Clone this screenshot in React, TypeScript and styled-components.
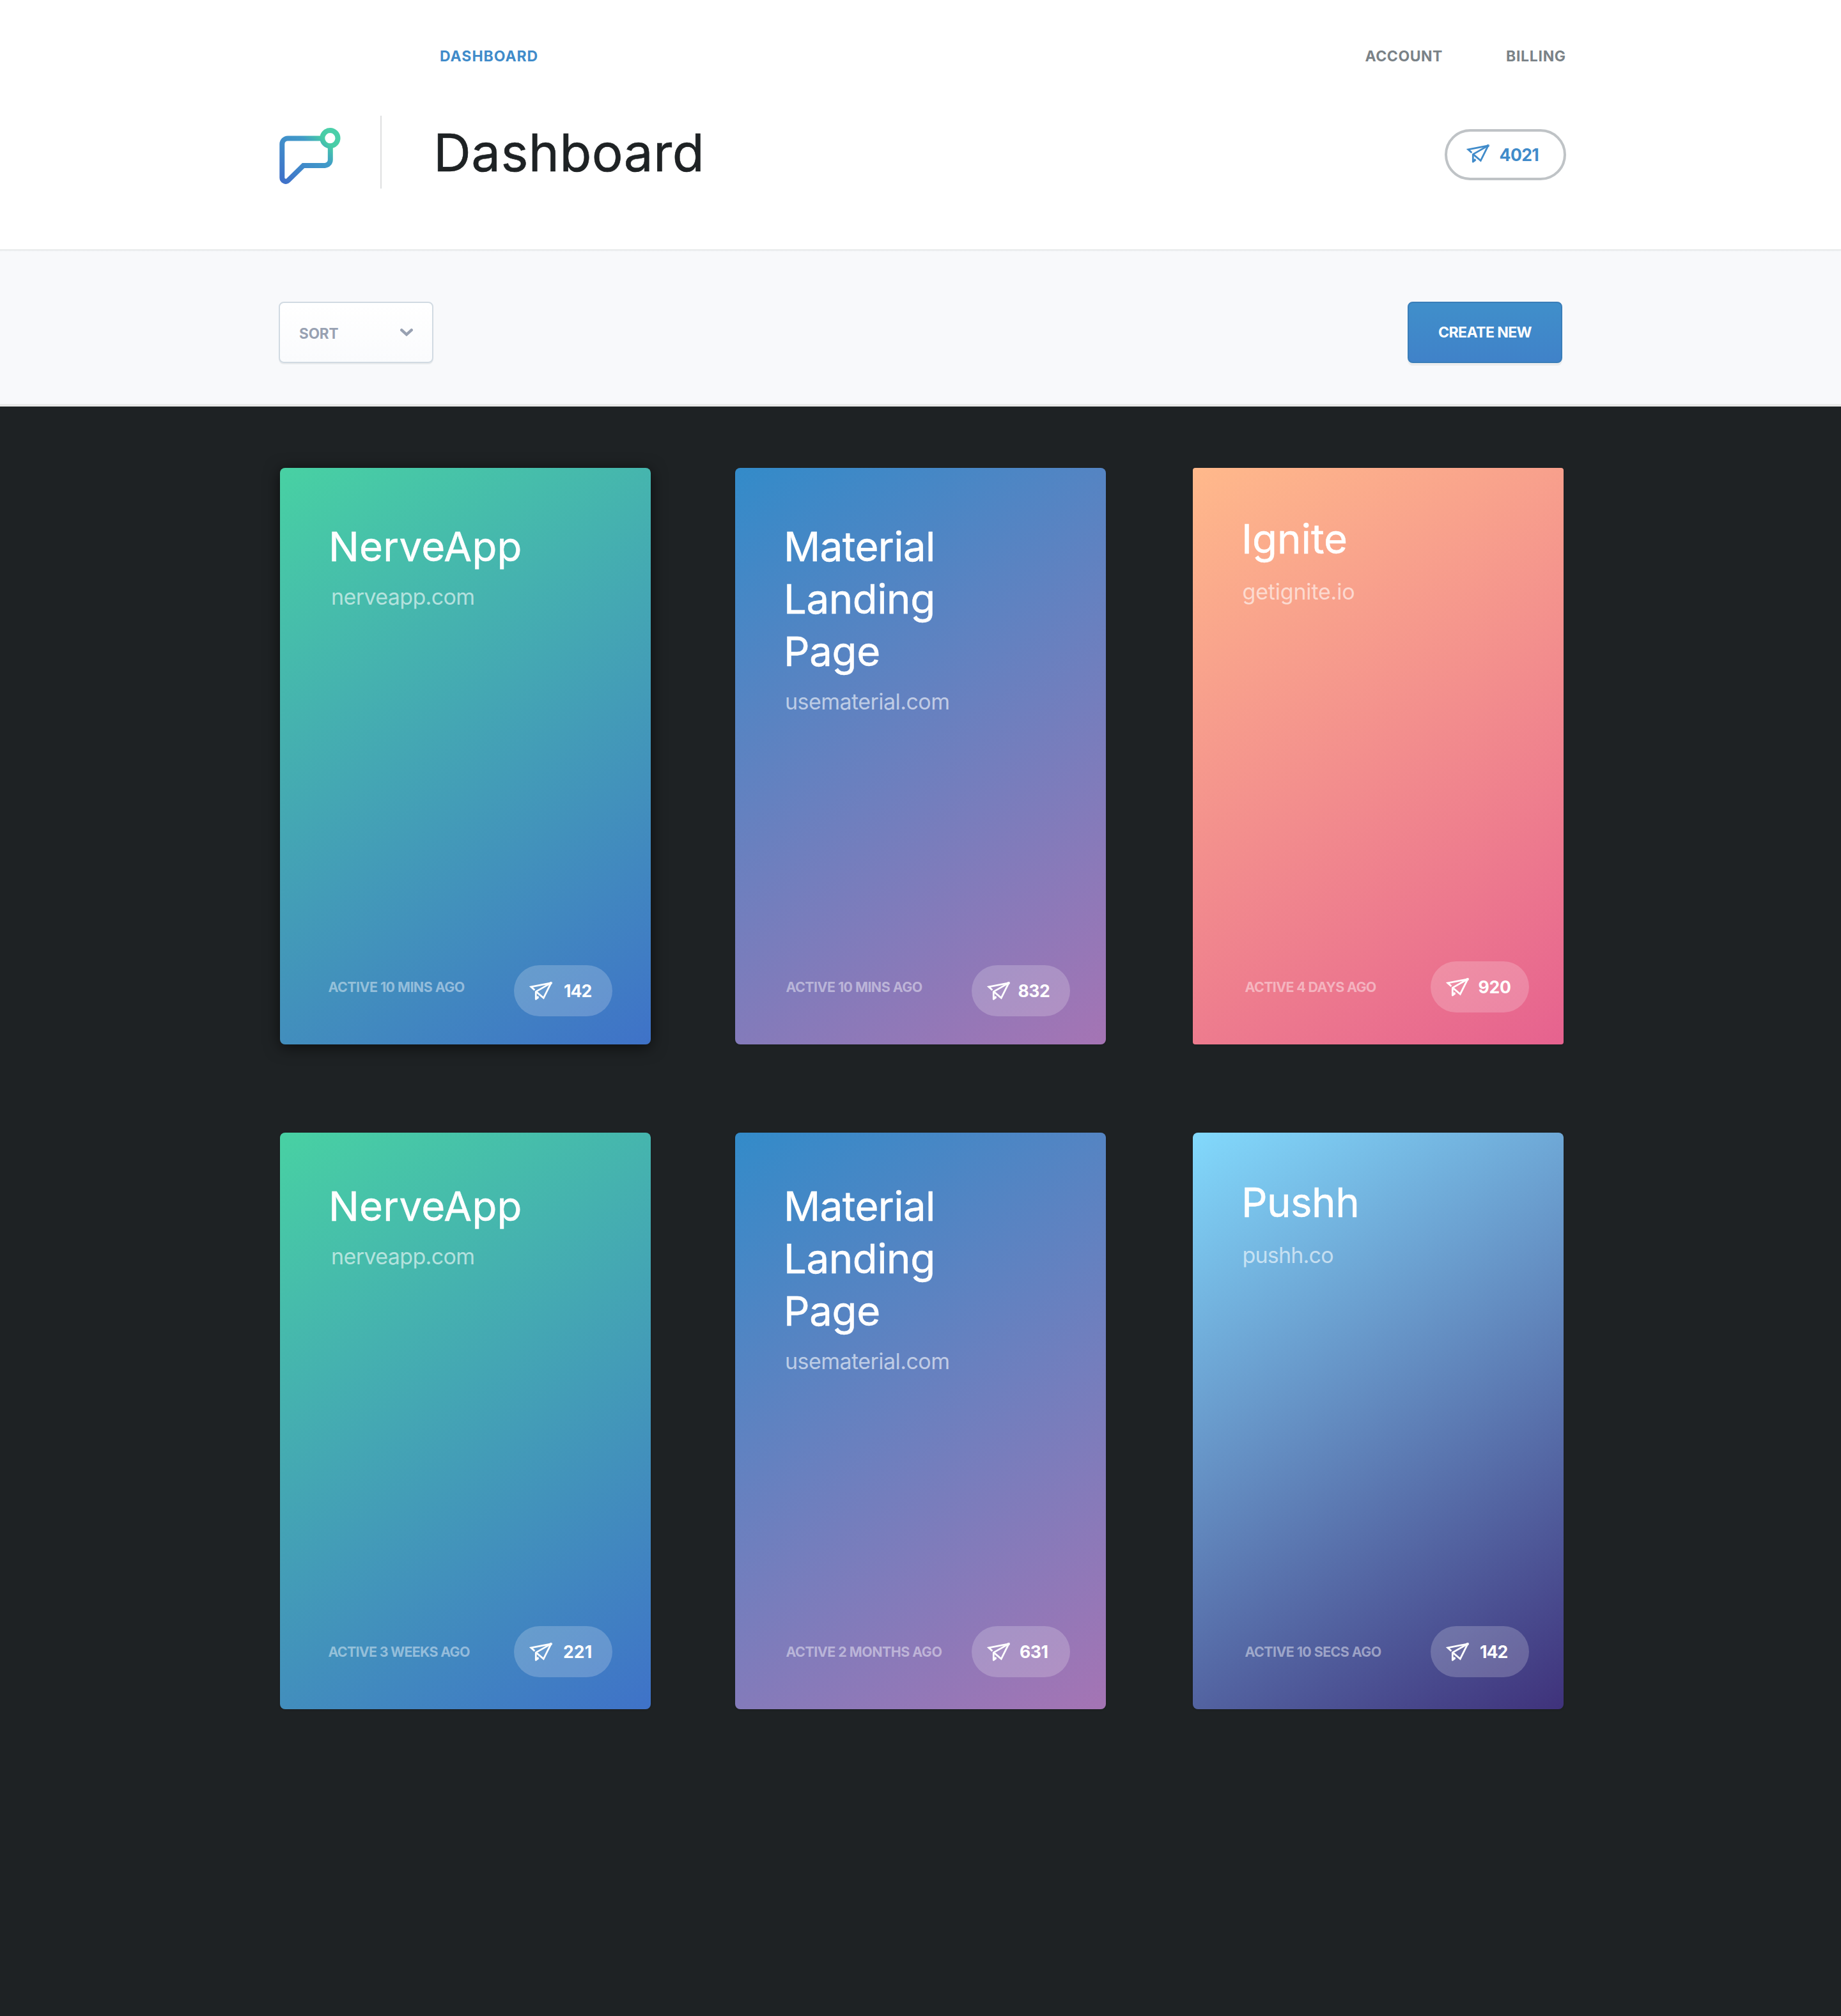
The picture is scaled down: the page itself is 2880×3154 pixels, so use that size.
import React from "react";
import styled, { createGlobalStyle } from "styled-components";

const GlobalStyle = createGlobalStyle`
  *, *::before, *::after { box-sizing: border-box; }
  body {
    margin: 0;
    background: #1e2224;
    font-family: Inter, "Liberation Sans", sans-serif;
  }
  h1, h2, p { margin: 0; font-weight: 400; }
  button { font-family: inherit; cursor: pointer; }
  svg { display: block; flex: none; }
`;

const Page = styled.div`
  width: 2880px;
  min-height: 3154px;
  background: #1e2224;
`;

/* ---------- header ---------- */

const Header = styled.header`
  height: 392px;
  padding: 74px 430px 0 436px;
  background: #fff;
  border-bottom: 2px solid #e7e9ea;
`;

const Nav = styled.nav`
  display: flex;
  justify-content: space-between;
  height: 28px;
  padding-left: 252px;
`;

const NavGroup = styled.div`
  display: grid;
  grid-template-columns: 220.5px 94px;
`;

const NavLink = styled.a<{ $active?: boolean; $tracking: number }>`
  color: ${(p) => (p.$active ? "#408bca" : "#7a8287")};
  font-size: 23px;
  font-weight: 700;
  line-height: 28px;
  letter-spacing: ${(p) => p.$tracking}px;
  white-space: nowrap;
`;

const Masthead = styled.div`
  display: flex;
  align-items: flex-start;
  margin-top: 79px;
`;

const LogoMark = styled.svg`
  width: 100px;
  height: 90px;
  margin-top: 19px;
`;

const Divider = styled.div`
  width: 2px;
  height: 114px;
  margin-left: 59px;
  background: #dedfe0;
`;

const Heading = styled.h1`
  flex: 1;
  margin: 10px 0 0 81px;
  color: #1e2224;
  font-size: 81.5px;
  line-height: 96px;
  letter-spacing: 0.4px;
  -webkit-text-stroke: 0.6px currentColor;
`;

const CreditPill = styled.div`
  display: flex;
  align-items: center;
  width: 190px;
  height: 80px;
  margin-top: 21px;
  padding-left: 30px;
  border: 4px solid #bfc3c6;
  border-radius: 40px;
  color: #408bca;

  svg { margin-top: -2px; }
`;

const Count = styled.span<{ $gap: number; $tracking: number }>`
  margin-left: ${(p) => p.$gap}px;
  font-size: 26.6px;
  font-weight: 700;
  line-height: 32px;
  letter-spacing: ${(p) => p.$tracking}px;
`;

/* ---------- toolbar ---------- */

const Toolbar = styled.section`
  display: flex;
  justify-content: space-between;
  align-items: flex-start;
  height: 244px;
  padding: 80px 436px 0;
  background: linear-gradient(#f3f5f7, #f8f9fb 3px);
  border-bottom: 4px solid #e9e9e8;
`;

const SortButton = styled.button`
  display: flex;
  justify-content: space-between;
  align-items: center;
  width: 242px;
  height: 96px;
  padding: 0 30px;
  border: 2px solid #d1dae2;
  border-radius: 8px;
  background: linear-gradient(#fff, #fafbfd);
  box-shadow: 0 2px 0 #e9ebed;
  color: #98a1b2;
  font-size: 22.5px;
  font-weight: 700;
  letter-spacing: -0.1px;

  span { padding-top: 3px; }
`;

const CreateButton = styled.button`
  width: 242px;
  height: 96px;
  padding: 0;
  border: 2px solid #3a7eb9;
  border-radius: 8px;
  background: linear-gradient(#408fca, #4082c9);
  box-shadow: 0 4px 0 #ecedee;
  color: #fff;
  font-size: 23.1px;
  font-weight: 700;
  letter-spacing: -0.62px;
`;

/* ---------- cards ---------- */

const Board = styled.main`
  display: grid;
  grid-template-columns: 712px 716px 580px;
  row-gap: 138px;
  padding: 96px 0 0 438px;
`;

const Card = styled.article<{ $fill: string; $top: number; $radius: number; $raised?: boolean }>`
  display: flex;
  flex-direction: column;
  width: 580px;
  height: 902px;
  padding-top: ${(p) => p.$top}px;
  border-radius: ${(p) => p.$radius}px;
  background: linear-gradient(147.26deg, ${(p) => p.$fill});
  box-shadow: ${(p) => (p.$raised ? "0 4px 24px rgba(0, 0, 0, 0.6)" : "0 1px 3px rgba(0, 0, 0, 0.15)")};
  color: #fff;
`;

const Name = styled.h2`
  padding-left: 76px;
  font-size: 63.5px;
  line-height: 82px;
  -webkit-text-stroke: 0.5px currentColor;
`;

const NameLine = styled.span<{ $tracking: number }>`
  display: block;
  letter-spacing: ${(p) => p.$tracking}px;
`;

const Domain = styled.p<{ $gap: number; $indent: number; $tracking: number }>`
  margin-top: ${(p) => p.$gap}px;
  padding-left: ${(p) => p.$indent}px;
  color: rgba(255, 255, 255, 0.6);
  font-size: 34px;
  line-height: 42px;
  letter-spacing: ${(p) => p.$tracking}px;
`;

const Footer = styled.footer<{ $left: number; $right: number; $bottom: number }>`
  display: flex;
  justify-content: space-between;
  align-items: flex-start;
  margin-top: auto;
  padding: 0 ${(p) => p.$right}px ${(p) => p.$bottom}px ${(p) => p.$left}px;
`;

const Activity = styled.span<{ $drop: number; $tracking: number }>`
  margin-top: ${(p) => p.$drop}px;
  color: rgba(255, 255, 255, 0.45);
  font-size: 21.4px;
  font-weight: 700;
  line-height: 26px;
  letter-spacing: ${(p) => p.$tracking}px;
  white-space: nowrap;
`;

const SentPill = styled.div`
  display: flex;
  align-items: center;
  width: 154px;
  height: 80px;
  padding-left: 24px;
  border-radius: 40px;
  background: rgba(255, 255, 255, 0.2);

  svg { margin-top: 2px; }
`;

/* ---------- drawings ---------- */

const Logo = () => (
  <LogoMark viewBox="0 0 100 90" fill="none">
    <defs>
      <linearGradient id="logo" gradientUnits="userSpaceOnUse" x1="8" y1="88" x2="85" y2="10">
        <stop offset="0" stopColor="#3f70c9" />
        <stop offset="0.45" stopColor="#408fca" />
        <stop offset="0.66" stopColor="#419bc8" />
        <stop offset="0.86" stopColor="#46cca5" />
        <stop offset="1" stopColor="#4bcfa9" />
      </linearGradient>
    </defs>
    <g stroke="url(#logo)" strokeWidth="8">
      <path d="M68.5 16.4H14.3a9 9 0 0 0-9 9V78a5.7 5.7 0 0 0 9.8 4L38.6 58.9H71.8a9 9 0 0 0 9-9V27.5" />
      <circle cx="80.4" cy="16.2" r="12.1" />
    </g>
  </LogoMark>
);

const PlaneIcon = () => (
  <svg width="36" height="30" viewBox="0 0 36 30" fill="none" stroke="currentColor" strokeWidth="2.8">
    <path strokeLinejoin="miter" d="M8.4 13 2.8 7.9 34 1.9" />
    <path strokeLinejoin="round" d="M34 1.9 10.3 15.4V27.2L14.6 24M13.2 22.6V25.4" />
    <path strokeLinejoin="miter" d="M11.2 15.9 22.3 25.3 34 1.9" />
    <circle cx="33.9" cy="1.9" r="0.7" />
  </svg>
);

const Chevron = () => (
  <svg width="20" height="12" viewBox="0 0 20 12" fill="none" stroke="currentColor" strokeWidth="4.4" strokeLinecap="round">
    <path d="M2.3 2.3 10 9.3 17.7 2.3" />
  </svg>
);

/* ---------- data ---------- */

interface Column {
  fill: string;
  urlGap: number;
  urlIndent: number;
  left: number;
  right: number;
}

interface Site {
  column: Column;
  fill?: string;
  name: [string, number][];
  top: number;
  radius: number;
  raised?: boolean;
  domain: [string, number];
  activity: [string, number];
  sent: [string, number, number];
  bottom: number;
}

const nerve: Column = { fill: "#48d1a3, #3f72c8", urlGap: 17, urlIndent: 80, left: 75.5, right: 60 };
const material: Column = { fill: "#338bc9, #a574b4", urlGap: 17, urlIndent: 78, left: 79.5, right: 56 };
const side: Column = { fill: "#ffb98b, #e6628f", urlGap: 21, urlIndent: 77.5, left: 81.5, right: 54 };

const nerveName: Site["name"] = [["NerveApp", 0.25]];
const materialName: Site["name"] = [["Material", -0.58], ["Landing", -0.45], ["Page", -0.3]];

const sites: Site[] = [
  { column: nerve, name: nerveName, top: 82, radius: 8, raised: true, domain: ["nerveapp.com", -0.62], activity: ["ACTIVE 10 MINS AGO", -0.54], sent: ["142", 18, -0.96], bottom: 44 },
  { column: material, name: materialName, top: 82, radius: 8, domain: ["usematerial.com", -0.55], activity: ["ACTIVE 10 MINS AGO", -0.54], sent: ["832", 12.5, -0.47], bottom: 44 },
  { column: side, name: [["Ignite", 0]], top: 70, radius: 4, domain: ["getignite.io", -0.19], activity: ["ACTIVE 4 DAYS AGO", -0.63], sent: ["920", 14.5, -0.2], bottom: 50 },
  { column: nerve, name: nerveName, top: 74, radius: 8, domain: ["nerveapp.com", -0.62], activity: ["ACTIVE 3 WEEKS AGO", -0.72], sent: ["221", 17, 0.1], bottom: 50 },
  { column: material, name: materialName, top: 74, radius: 8, domain: ["usematerial.com", -0.55], activity: ["ACTIVE 2 MONTHS AGO", -0.5], sent: ["631", 15, -0.5], bottom: 50 },
  { column: side, fill: "#82d9fc, #3f327b", name: [["Pushh", -0.5]], top: 68, radius: 8, domain: ["pushh.co", -0.8], activity: ["ACTIVE 10 SECS AGO", -0.57], sent: ["142", 17, -0.96], bottom: 50 },
];

const SiteCard = ({ site }: { site: Site }) => {
  const { column } = site;
  return (
    <Card $fill={site.fill ?? column.fill} $top={site.top} $radius={site.radius} $raised={site.raised}>
      <Name>
        {site.name.map(([line, tracking]) => (
          <NameLine key={line} $tracking={tracking}>{line}</NameLine>
        ))}
      </Name>
      <Domain $gap={column.urlGap} $indent={column.urlIndent} $tracking={site.domain[1]}>{site.domain[0]}</Domain>
      <Footer $left={column.left} $right={column.right} $bottom={site.bottom}>
        <Activity $drop={site.bottom - 23} $tracking={site.activity[1]}>{site.activity[0]}</Activity>
        <SentPill>
          <PlaneIcon />
          <Count $gap={site.sent[1]} $tracking={site.sent[2]}>{site.sent[0]}</Count>
        </SentPill>
      </Footer>
    </Card>
  );
};

export default function App() {
  return (
    <Page>
      <GlobalStyle />
      <Header>
        <Nav>
          <NavLink $active $tracking={0.95}>DASHBOARD</NavLink>
          <NavGroup>
            <NavLink $tracking={0.55}>ACCOUNT</NavLink>
            <NavLink $tracking={0.7}>BILLING</NavLink>
          </NavGroup>
        </Nav>
        <Masthead>
          <Logo />
          <Divider />
          <Heading>Dashboard</Heading>
          <CreditPill>
            <PlaneIcon />
            <Count $gap={15.5} $tracking={-0.6}>4021</Count>
          </CreditPill>
        </Masthead>
      </Header>
      <Toolbar>
        <SortButton>
          <span>SORT</span>
          <Chevron />
        </SortButton>
        <CreateButton>CREATE NEW</CreateButton>
      </Toolbar>
      <Board>
        {sites.map((site, i) => (
          <SiteCard key={i} site={site} />
        ))}
      </Board>
    </Page>
  );
}
